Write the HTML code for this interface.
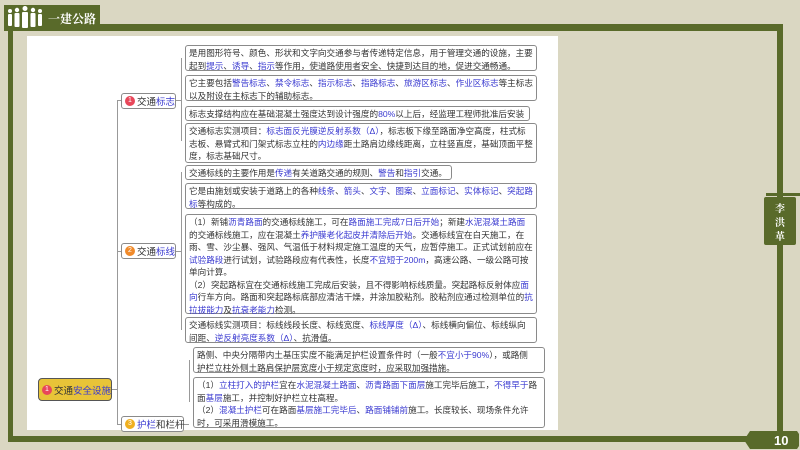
<!DOCTYPE html>
<html><head><meta charset="utf-8"><style>
*{margin:0;padding:0;box-sizing:border-box}
body{width:800px;height:450px;background:#dad7c2;position:relative;overflow:hidden;font-family:"Liberation Sans","Noto Sans CJK SC",sans-serif}
.g{position:absolute;background:#596a2a}
.w{position:absolute;left:27px;top:36px;width:531px;height:394px;background:#fff}
.b{position:absolute;border:1px solid #8a8a8a;border-radius:3px;background:#fff;font-size:8.6px;line-height:12.5px;color:#333;padding:1px 3px;white-space:nowrap}
.u{color:#3a3ad0}
.n{position:absolute;border:1px solid #8a8a8a;border-radius:3px;background:#fff;font-size:9.5px;padding:0 3px;white-space:nowrap;color:#333;display:flex;align-items:center}
.c{display:inline-block;flex:none;width:10px;height:10px;border-radius:50%;color:#fff;font-size:7px;line-height:10px;text-align:center;margin-right:2px}
.l{position:absolute;background:#999}
</style></head><body>
<div class="g" style="left:4px;top:5px;width:96px;height:26px"></div>
<svg style="position:absolute;left:6px;top:6px" width="40" height="24" viewBox="0 0 40 24" fill="#fff">
<circle cx="4" cy="5" r="2"/><rect x="2" y="8" width="4" height="12" rx="1"/>
<circle cx="11" cy="4" r="2.2"/><rect x="8.5" y="7" width="5" height="14" rx="1"/>
<circle cx="19" cy="2.5" r="2.5"/><rect x="16" y="6" width="6" height="16" rx="1"/>
<circle cx="27" cy="4" r="2.2"/><rect x="24.5" y="7" width="5" height="14" rx="1"/>
<circle cx="34" cy="5" r="2"/><rect x="32" y="8" width="4" height="12" rx="1"/>
</svg>
<div style="position:absolute;left:48px;top:10px;color:#fff;font-size:12px;font-weight:bold;font-family:'Noto Serif CJK SC',serif">一建公路</div>
<div class="g" style="left:100px;top:24px;width:683px;height:7px"></div>
<div class="g" style="left:8px;top:30px;width:5px;height:412px"></div>
<div class="g" style="left:8px;top:436px;width:740px;height:6px"></div>
<div class="g" style="left:777px;top:28px;width:6px;height:405px"></div>
<div class="g" style="left:766px;top:193px;width:34px;height:3px"></div>
<div class="g" style="left:764px;top:197px;width:32px;height:48px;border-radius:2px"></div>
<div style="position:absolute;left:764px;top:201px;width:32px;color:#fff;font-size:10px;line-height:14px;text-align:center;font-weight:bold;font-family:'Noto Serif CJK SC',serif">李<br>洪<br>革</div>
<svg style="position:absolute;left:744px;top:431px" width="55" height="18"><polygon points="6,0 53,0 55,3 55,15 53,18 6,18 0,9" fill="#596a2a"/><text x="30" y="14" fill="#fff" font-size="13" font-weight="bold" font-family="Liberation Sans">10</text></svg>
<div class="w"></div>

<div class="l" style="left:117px;top:100px;width:1px;height:325px"></div>
<div class="l" style="left:111px;top:389px;width:6px;height:1px"></div>
<div class="l" style="left:117px;top:100px;width:4px;height:1px"></div>
<div class="l" style="left:117px;top:251px;width:4px;height:1px"></div>
<div class="l" style="left:117px;top:424px;width:4px;height:1px"></div>
<div class="l" style="left:181px;top:58px;width:1px;height:83px"></div>
<div class="l" style="left:176px;top:100px;width:5px;height:1px"></div>
<div class="l" style="left:181px;top:172px;width:1px;height:158px"></div>
<div class="l" style="left:176px;top:251px;width:5px;height:1px"></div>
<div class="l" style="left:189px;top:360px;width:1px;height:42px"></div>
<div class="l" style="left:184px;top:424px;width:5px;height:1px"></div>

<div class="n" style="left:38px;top:378px;width:74px;height:23px;background:#e8c438;border:1.5px solid #555;border-radius:4px"><span class="c" style="background:#e8475a">1</span>交通<span class="u">安全设施</span></div>
<div class="n" style="left:121px;top:93px;width:55px;height:16px"><span class="c" style="background:#e8475a">1</span>交通<span class="u">标志</span></div>
<div class="n" style="left:121px;top:243px;width:55px;height:16px"><span class="c" style="background:#f08a2a">2</span>交通<span class="u">标线</span></div>
<div class="n" style="left:121px;top:416px;width:63px;height:16px"><span class="c" style="background:#f0b020">3</span><span class="u">护栏</span>和栏杆</div>

<div class="b" style="left:185px;top:45px;width:352px;height:26px">是用图形符号、颜色、形状和文字向交通参与者传递特定信息，用于管理交通的设施，主要<br>起到<span class="u">提示</span>、<span class="u">诱导</span>、<span class="u">指示</span>等作用，使道路使用者安全、快捷到达目的地，促进交通畅通。</div>
<div class="b" style="left:185px;top:75px;width:352px;height:26px">它主要包括<span class="u">警告标志</span>、<span class="u">禁令标志</span>、<span class="u">指示标志</span>、<span class="u">指路标志</span>、<span class="u">旅游区标志</span>、<span class="u">作业区标志</span>等主标志<br>以及附设在主标志下的辅助标志。</div>
<div class="b" style="left:185px;top:106px;width:345px;height:15px">标志支撑结构应在基础混凝土强度达到设计强度的<span class="u">80%</span>以上后，经监理工程师批准后安装</div>
<div class="b" style="left:185px;top:123px;width:352px;height:40px">交通标志实测项目：<span class="u">标志面反光膜逆反射系数（Δ）</span>，标志板下缘至路面净空高度，柱式标<br>志板、悬臂式和门架式标志立柱的<span class="u">内边缘</span>距土路肩边缘线距离，立柱竖直度，基础顶面平整<br>度，标志基础尺寸。</div>
<div class="b" style="left:185px;top:165px;width:267px;height:15px">交通标线的主要作用是<span class="u">传递</span>有关道路交通的规则、<span class="u">警告</span>和<span class="u">指引</span>交通。</div>
<div class="b" style="left:185px;top:183px;width:352px;height:26px">它是由施划或安装于道路上的各种<span class="u">线条</span>、<span class="u">箭头</span>、<span class="u">文字</span>、<span class="u">图案</span>、<span class="u">立面标记</span>、<span class="u">实体标记</span>、<span class="u">突起路<br>标</span>等构成的。</div>
<div class="b" style="left:185px;top:214px;width:352px;height:100px">（1）新铺<span class="u">沥青路面</span>的交通标线施工，可在<span class="u">路面施工完成7日后开始</span>；新建<span class="u">水泥混凝土路面</span><br>的交通标线施工，应在混凝土<span class="u">养护膜老化起皮并清除后开始</span>。交通标线宜在白天施工，在<br>雨、雪、沙尘暴、强风、气温低于材料规定施工温度的天气，应暂停施工。正式试划前应在<br><span class="u">试验路段</span>进行试划，试验路段应有代表性，长度<span class="u">不宜短于200m</span>，高速公路、一级公路可按<br>单向计算。<br>（2）突起路标宜在交通标线施工完成后安装，且不得影响标线质量。突起路标反射体应<span class="u">面<br>向</span>行车方向。路面和突起路标底部应清洁干燥，并涂加胶粘剂。胶粘剂应通过检测单位的<span class="u">抗<br>拉拔能力</span>及<span class="u">抗衰老能力</span>检测。</div>
<div class="b" style="left:185px;top:317px;width:352px;height:26px">交通标线实测项目：标线线段长度、标线宽度、<span class="u">标线厚度（Δ）</span>、标线横向偏位、标线纵向<br>间距、<span class="u">逆反射亮度系数（Δ）</span>、抗滑值。</div>
<div class="b" style="left:193px;top:347px;width:352px;height:26px">路侧、中央分隔带内土基压实度不能满足护栏设置条件时（一般<span class="u">不宜小于90%</span>），或路侧<br>护栏立柱外侧土路肩保护层宽度小于规定宽度时，应采取加强措施。</div>
<div class="b" style="left:193px;top:377px;width:352px;height:51px">（1）<span class="u">立柱打入的护栏</span>宜在<span class="u">水泥混凝土路面</span>、<span class="u">沥青路面下面层</span>施工完毕后施工，<span class="u">不得早于</span>路<br>面<span class="u">基层</span>施工，并控制好护栏立柱高程。<br>（2）<span class="u">混凝土护栏</span>可在路面<span class="u">基层施工完毕后</span>、<span class="u">路面铺铺前</span>施工。长度较长、现场条件允许<br>时，可采用滑模施工。</div>
</body></html>
